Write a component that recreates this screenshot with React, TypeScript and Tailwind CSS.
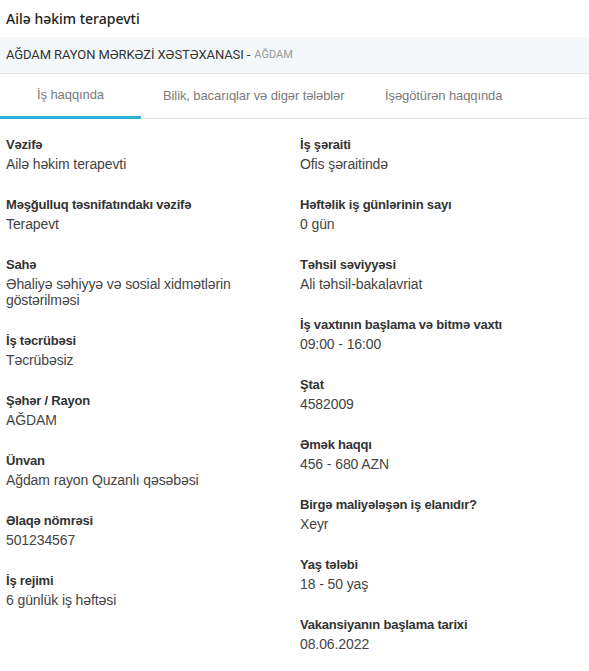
import React from 'react';

type Item = { label: string; value: string };

const left: Item[] = [
  { label: 'Vəzifə', value: 'Ailə həkim terapevti' },
  { label: 'Məşğulluq təsnifatındakı vəzifə', value: 'Terapevt' },
  { label: 'Sahə', value: 'Əhaliyə səhiyyə və sosial xidmətlərin göstərilməsi' },
  { label: 'İş təcrübəsi', value: 'Təcrübəsiz' },
  { label: 'Şəhər / Rayon', value: 'AĞDAM' },
  { label: 'Ünvan', value: 'Ağdam rayon Quzanlı qəsəbəsi' },
  { label: 'Əlaqə nömrəsi', value: '501234567' },
  { label: 'İş rejimi', value: '6 günlük iş həftəsi' },
];

const right: Item[] = [
  { label: 'İş şəraiti', value: 'Ofis şəraitində' },
  { label: 'Həftəlik iş günlərinin sayı', value: '0 gün' },
  { label: 'Təhsil səviyyəsi', value: 'Ali təhsil-bakalavriat' },
  { label: 'İş vaxtının başlama və bitmə vaxtı', value: '09:00 - 16:00' },
  { label: 'Ştat', value: '4582009' },
  { label: 'Əmək haqqı', value: '456 - 680 AZN' },
  { label: 'Birgə maliyələşən iş elanıdır?', value: 'Xeyr' },
  { label: 'Yaş tələbi', value: '18 - 50 yaş' },
  { label: 'Vakansiyanın başlama tarixi', value: '08.06.2022' },
];

function Field({ label, value }: Item) {
  return (
    <div className="mb-[24px]">
      <div className="text-[13px] leading-[18px] font-bold text-[#333] tracking-[-0.2px]">{label}</div>
      <div className="mt-[2px] text-[14px] leading-[16px] text-[#444] pr-8 tracking-[-0.1px]">{value}</div>
    </div>
  );
}

export default function App() {
  return (
    <div className="w-[589px] bg-white font-['Liberation_Sans',Arial,sans-serif]">
      {/* title */}
      <div className="h-[37px] flex items-center px-[6px]">
        <h1 className="font-['Noto_Sans',sans-serif] text-[14px] font-medium text-[#222]">Ailə həkim terapevti</h1>
      </div>

      {/* employer band */}
      <div className="h-[37px] bg-[#f4f8fb] border-b border-[#e3e6e8] flex items-center px-[6px] font-['Roboto',sans-serif]">
        <span className="text-[13px] text-[#333] tracking-[-0.1px]">AĞDAM RAYON MƏRKƏZİ XƏSTƏXANASI - </span>
        <span className="text-[11px] text-[#9a9a9a] ml-[4px]">AĞDAM</span>
      </div>

      {/* tabs */}
      <div className="flex h-[45px] border-b border-[#e2e2e2] text-[13px] text-[#7a7a7a] tracking-[-0.1px]">
        <div className="w-[141px] flex items-center justify-center border-b-[3px] border-[#2bb0d8] -mb-px">İş haqqında</div>
        <div className="w-[223px] flex items-center pl-[22px]">Bilik, bacarıqlar və digər tələblər</div>
        <div className="flex items-center pl-[21px]">İşəgötürən haqqında</div>
      </div>

      {/* details */}
      <div className="grid grid-cols-[294px_1fr] px-[6px] pt-[17px]">
        <div>
          {left.map((it) => (
            <Field key={it.label} {...it} />
          ))}
        </div>
        <div>
          {right.map((it) => (
            <Field key={it.label} {...it} />
          ))}
        </div>
      </div>
    </div>
  );
}
